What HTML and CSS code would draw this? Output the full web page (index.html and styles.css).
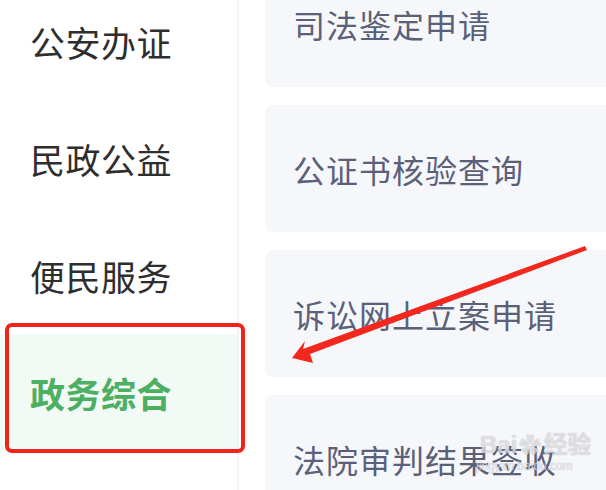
FILE: index.html
```html
<!DOCTYPE html>
<html lang="zh-CN">
<head>
<meta charset="utf-8">
<title>政务服务</title>
<link rel="stylesheet" href="styles.css">
</head>
<body>
<div class="page">
  <nav class="side">
    <div class="side-list">
      <div class="side-item">公安办证</div>
      <div class="side-item">民政公益</div>
      <div class="side-item">便民服务</div>
      <div class="side-item active">政务综合</div>
    </div>
  </nav>
  <main class="content">
    <div class="cards">
      <div class="card">司法鉴定申请</div>
      <div class="card">公证书核验查询</div>
      <div class="card">诉讼网上立案申请</div>
      <div class="card">法院审判结果签收</div>
    </div>
  </main>
  <div class="mark-box"></div>
  <svg class="arrow" width="606" height="490" viewBox="0 0 606 490">
    <polygon points="585,246 587,250 310,354 313,363 292,358 305,341 303,349" fill="#f2271d"/>
  </svg>
  <div class="watermark">
    <span class="wm-top">Bai<span class="wm-paw">✿</span>经验</span>
    <span class="wm-url">jingyan.baidu.com</span>
  </div>
</div>
</body>
</html>
```
FILE: styles.css
```css
html, body {
  margin: 0;
  padding: 0;
  background: #ffffff;
}
body {
  width: 606px;
  height: 490px;
  overflow: hidden;
  font-family: "Noto Sans CJK SC", "Noto Sans", sans-serif;
}
.page {
  position: relative;
  display: flex;
  width: 606px;
  height: 490px;
  overflow: hidden;
}
.side {
  width: 237px;
  flex: 0 0 237px;
  border-right: 2px solid #f3f3f4;
  background: #fff;
}
.side-list {
  display: flex;
  flex-direction: column;
  margin-top: -17px;
}
.side-item {
  height: 117px;
  display: flex;
  align-items: center;
  padding-left: 30px;
  font-size: 35px;
  color: #2e2e2e;
  letter-spacing: 0.5px;
}
.side-item.active {
  background: #f2faf5;
  color: #4caf62;
  font-weight: 700;
}
.content {
  flex: 1;
  padding-left: 26px;
  overflow: hidden;
}
.cards {
  display: flex;
  flex-direction: column;
  gap: 18px;
  margin-top: -40px;
  margin-right: -30px;
}
.card {
  height: 127px;
  flex: 0 0 127px;
  border-radius: 8px;
  background: #f6f7fa;
  display: flex;
  align-items: center;
  padding-left: 28px;
  font-size: 32px;
  color: #5b6079;
  letter-spacing: 1px;
}
.mark-box {
  position: absolute;
  left: 5px;
  top: 323px;
  width: 232px;
  height: 122px;
  border: 4px solid #f2231b;
  border-radius: 7px;
}
.arrow {
  position: absolute;
  left: 0;
  top: 0;
}
.watermark {
  position: absolute;
  left: 468px;
  top: 432px;
  width: 130px;
  display: flex;
  flex-direction: column;
  white-space: nowrap;
  color: rgba(255, 255, 255, 0.6);
  text-shadow: 0 0 1px rgba(120, 120, 130, 0.6);
}
.wm-top {
  font-family: "Liberation Sans", "Noto Sans CJK SC", sans-serif;
  font-size: 24px;
  font-weight: 700;
  line-height: 26px;
  padding-left: 12px;
}
.wm-paw {
  font-size: 22px;
  margin: 0 2px;
}
.wm-url {
  font-family: "Liberation Sans", sans-serif;
  font-size: 12px;
  line-height: 14px;
  padding-left: 8px;
}
```
